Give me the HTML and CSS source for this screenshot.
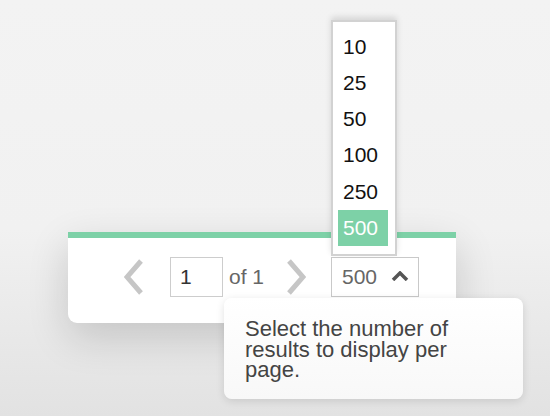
FILE: index.html
```html
<!DOCTYPE html>
<html lang="en">
<head>
    <meta charset="UTF-8">
    <meta name="viewport" content="width=device-width, initial-scale=1.0">
    <title>Pagination</title>
    <link rel="stylesheet" href="styles.css">
</head>
<body>

    <div class="pager">
        <button class="nav-btn" type="button" aria-label="Previous page">
            <svg width="20" height="36" viewBox="0 0 20 36"><polyline points="17,2 3,18 17,34" /></svg>
        </button>
        <input class="page-input" type="text" value="1">
        <span class="page-total">of 1</span>
        <button class="nav-btn next" type="button" aria-label="Next page">
            <svg width="20" height="36" viewBox="0 0 20 36"><polyline points="3,2 17,18 3,34" /></svg>
        </button>

        <div class="size-wrap">
            <ul class="size-list">
                <li>10</li>
                <li>25</li>
                <li>50</li>
                <li>100</li>
                <li>250</li>
                <li class="selected">500</li>
            </ul>
            <div class="size-select">
                <span>500</span>
                <svg width="18" height="10" viewBox="0 0 18 10"><polyline points="2,9 9,2 16,9" /></svg>
            </div>
            <div class="tooltip">Select the number of results to display per page.</div>
        </div>
    </div>

</body>
</html>
```

FILE: styles.css
```css
html {
    height: 100%;
}
body {
    font-family: "Liberation Sans", Arial, sans-serif;
    background: linear-gradient(#f3f3f3 0%, #f1f1f1 55%, #e2e2e2 100%);
    min-height: 100%;
    margin: 0;
    padding-top: 232px;
    box-sizing: border-box;
}
.pager {
    margin-left: 68px;
    width: 388px;
    box-sizing: border-box;
    background-color: white;
    border-top: 6px solid #7dd1a7;
    border-radius: 0 0 9px 9px;
    box-shadow: 0 14px 40px rgba(0, 0, 0, 0.16);
    padding: 18px 0 26px 56px;
    display: flex;
    align-items: center;
}
.nav-btn {
    background: none;
    border: none;
    padding: 0;
    width: 20px;
    height: 36px;
    margin-right: 26px;
    cursor: pointer;
}
.nav-btn.next {
    margin-right: 25px;
}
.nav-btn svg polyline {
    fill: none;
    stroke: #c6c6c6;
    stroke-width: 5;
}
.page-input {
    width: 53px;
    height: 40px;
    box-sizing: border-box;
    border: 1.5px solid #cdcdcd;
    padding: 0 0 0 9px;
    font-family: inherit;
    font-size: 21px;
    color: #333;
    margin-right: 6px;
}
.page-total {
    font-size: 21px;
    color: #666;
    width: 57px;
}
.size-wrap {
    position: relative;
}
.size-select {
    width: 88px;
    height: 40px;
    box-sizing: border-box;
    border: 1.5px solid #c9c9c9;
    padding: 0 0 0 10px;
    margin-top: 1px;
    display: flex;
    align-items: center;
    font-size: 21px;
    color: #666;
}
.size-select svg {
    margin-left: 14px;
    margin-top: -3px;
}
.size-select svg polyline {
    fill: none;
    stroke: #555;
    stroke-width: 3.5;
}
.size-list {
    position: absolute;
    left: 0;
    bottom: 100%;
    width: 66px;
    box-sizing: border-box;
    list-style: none;
    margin: 0;
    padding: 7px 7px 8px 5px;
    background-color: white;
    border: 2px solid #d2d2d2;
    box-shadow: 0 -3px 6px rgba(0, 0, 0, 0.12);
}
.size-list li {
    height: 36.2px;
    line-height: 36.2px;
    padding-left: 5px;
    font-size: 21px;
    color: #111;
}
.size-list li.selected {
    background-color: #7dd1a7;
    color: white;
}
.tooltip {
    position: absolute;
    left: -107px;
    top: 42px;
    width: 299px;
    height: 101px;
    box-sizing: border-box;
    padding: 21px 21px 0 21px;
    background: linear-gradient(#ffffff, #f8f8f8);
    border-radius: 8px;
    box-shadow: 0 2px 8px rgba(0, 0, 0, 0.12);
    font-size: 22px;
    line-height: 20.5px;
    color: #444;
}
```
